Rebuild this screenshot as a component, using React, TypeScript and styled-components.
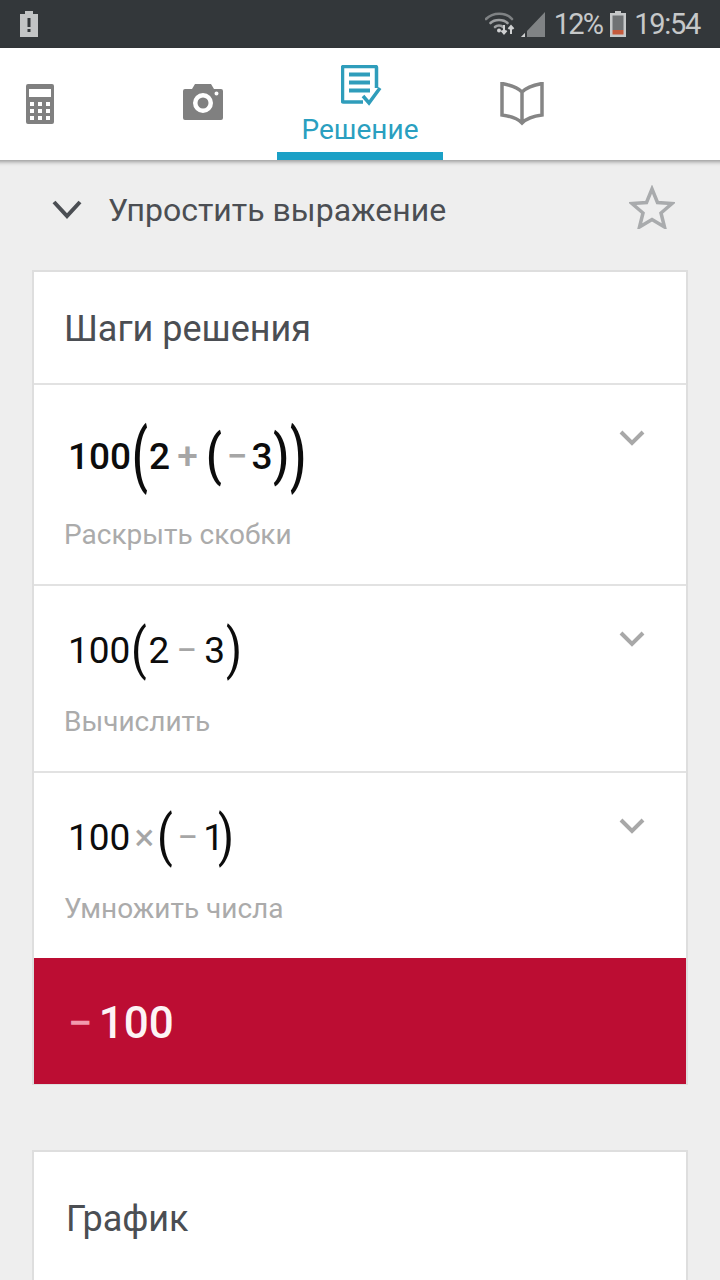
import React from "react";
import styled, { createGlobalStyle } from "styled-components";

const Global = createGlobalStyle`
  html, body { margin: 0; padding: 0; background: #eeeeee; }
  body { font-family: Roboto, "Liberation Sans", sans-serif; }
`;

const Page = styled.div`
  width: 720px;
  height: 1280px;
  overflow: hidden;
  display: flex;
  flex-direction: column;
  background: #eeeeee;
`;

const StatusBar = styled.div`
  height: 48px;
  flex: none;
  background: #33373a;
  display: flex;
  align-items: center;
  justify-content: space-between;
  padding: 0 20px;
  color: #c6c8c9;
  font-size: 29px;
`;

const StatusRight = styled.div`
  display: flex;
  align-items: center;
`;

const StatusText = styled.span<{ $ml: number; $ls: number }>`
  margin-left: ${(p) => p.$ml}px;
  line-height: 48px;
  letter-spacing: ${(p) => p.$ls}px;
`;

const Icon = styled.svg<{ $ml?: number; $mb?: number }>`
  display: block;
  flex: none;
  margin-left: ${(p) => p.$ml ?? 0}px;
  margin-bottom: ${(p) => p.$mb ?? 0}px;
`;

const TabBar = styled.nav`
  height: 112px;
  flex: none;
  background: #ffffff;
  display: flex;
  margin-left: -41px;
  box-shadow: 0 2px 4px rgba(0, 0, 0, 0.35);
  position: relative;
  width: 802px;
`;

const Tab = styled.div<{ $w: number }>`
  width: ${(p) => p.$w}px;
  position: relative;
  display: flex;
  flex-direction: column;
  align-items: center;
`;

const TabIcon = styled.svg<{ $top: number; $left?: number }>`
  display: block;
  margin-top: ${(p) => p.$top}px;
  margin-left: ${(p) => p.$left ?? 0}px;
`;

const TabLabel = styled.span`
  font-size: 28px;
  line-height: 30px;
  margin-top: 6px;
  color: #2a9fc0;
`;

const TabUnderline = styled.span`
  position: absolute;
  left: -8px;
  right: -8px;
  bottom: 0;
  height: 8px;
  background: #1ba0c6;
`;

const Toolbar = styled.div`
  height: 110px;
  box-sizing: border-box;
  flex: none;
  display: flex;
  align-items: center;
  padding: 0 45px 10px 52px;
`;

const ToolbarTitle = styled.h1`
  flex: 1;
  margin: 0 0 0 26px;
  font-size: 32px;
  font-weight: 400;
  color: #4b4e53;
`;

const Card = styled.section`
  margin: 0 32px;
  background: #ffffff;
  border: 2px solid #dedede;
  border-bottom-width: 1px;
  flex: none;
`;

const CardTitle = styled.h2<{ $pad: number }>`
  margin: 0;
  font-size: 36px;
  font-weight: 400;
  color: #4b4e53;
  padding-left: ${(p) => p.$pad}px;
`;

const StepsHeader = styled.div`
  height: 111px;
  box-sizing: border-box;
  padding-top: 2px;
  display: flex;
  align-items: center;
`;

const Step = styled.div<{ $h: number }>`
  height: ${(p) => p.$h}px;
  box-sizing: border-box;
  border-top: 2px solid #e2e2e2;
  padding: 0 41px 0 30px;
  display: flex;
  justify-content: space-between;
`;

const StepBody = styled.div`
  display: flex;
  flex-direction: column;
`;

const MathLine = styled.div<{ $top: number; $bold?: boolean; $h: number }>`
  display: flex;
  align-items: center;
  height: ${(p) => p.$h}px;
  margin-top: ${(p) => p.$top}px;
  margin-left: 4px;
  font-size: 37px;
  font-weight: ${(p) => (p.$bold ? 500 : 400)};
  color: #0c0c0c;
`;

const Paren = styled.span<{ $scale: number; $w: number }>`
  display: inline-block;
  width: ${(p) => p.$w}px;
  text-align: center;
  font-size: 40px;
  line-height: 40px;
  transform: scale(1.15, ${(p) => p.$scale});
`;

const NarrowDigit = styled.span`
  letter-spacing: -6px;
`;

const Operator = styled.span<{ $mx: number }>`
  color: #a6a6a6;
  margin: 0 ${(p) => p.$mx}px;
`;

const StepNote = styled.div<{ $top: number }>`
  font-size: 28px;
  line-height: 32px;
  color: #ababab;
  margin-top: ${(p) => p.$top}px;
`;

const Chevron = styled.svg`
  display: block;
  margin-top: 44px;
  flex: none;
`;

const Result = styled.div`
  height: 126px;
  box-sizing: border-box;
  padding: 3px 0 0 34px;
  background: #bc0d33;
  display: flex;
  align-items: center;
  color: #fdf3f5;
  font-size: 44px;
  font-weight: 500;
`;

const ResultMinus = styled.span`
  color: #f29aae;
  margin-right: 6px;
`;

const GraphCard = styled(Card)`
  margin-top: 65px;
  height: 200px;
`;

const GraphHeader = styled.div`
  height: 134px;
  display: flex;
  align-items: center;
`;

const StepChevron = () => (
  <Chevron width="26" height="18" viewBox="0 0 26 18">
    <path d="M2 3l11 11L24 3" fill="none" stroke="#a8a8a8" strokeWidth="4" />
  </Chevron>
);

export default function App() {
  return (
    <Page>
      <Global />
      <StatusBar>
        <Icon width="18" height="26" viewBox="0 0 18 26">
          <path d="M5 0h8v3h5v23H0V3h5z" fill="#c2c4c5" />
          <path d="M7.500 7h3v9h-3zM7.500 18h3v3h-3z" fill="#33373a" />
        </Icon>
        <StatusRight>
          <Icon width="34" height="26" viewBox="0 0 34 26">
            <g fill="none" stroke="#9d9fa1" strokeLinecap="round">
              <path d="M1 8c7-7 20-7 26 0" strokeWidth="2.6" stroke="#7f8284" />
              <path d="M5.500 12c4-4 13-4 17 0" strokeWidth="2.6" />
              <path d="M10 16c2-2 6-2 8 0" strokeWidth="2.6" />
            </g>
            <circle cx="14" cy="19.500" r="2" fill="#d0d1d2" />
            <path d="M19 14v8M16.500 19.500l2.500 3 2.500-3M26 23v-8M23.500 18l2.500-3 2.500 3" stroke="#d0d1d2" strokeWidth="2" fill="none" />
          </Icon>
          <Icon $ml={2} width="24" height="26" viewBox="0 0 24 26">
            <path d="M0 26l4-4v4zM6 20L24 1v25H6z" fill="#808385" />
            <path d="M0 26l4-4v4z" fill="#d0d1d2" />
          </Icon>
          <StatusText $ml={9} $ls={-1.8}>12%</StatusText>
          <Icon $ml={8} width="16" height="26" viewBox="0 0 16 26">
            <path d="M5 0h6v2h5v24H0V2h5z" fill="#c6c8c9" />
            <path d="M2.500 4.500h11V19h-11z" fill="#6f7274" />
            <path d="M2.500 19h11v4.500h-11z" fill="#c45a3c" />
          </Icon>
          <StatusText $ml={8} $ls={-1.3}>19:54</StatusText>
        </StatusRight>
      </StatusBar>

      <TabBar>
        <Tab $w={162}>
          <TabIcon $top={36} width="28" height="40" viewBox="0 0 28 40">
            <path fillRule="evenodd" d="M2 0h24a2 2 0 0 1 2 2v36a2 2 0 0 1-2 2H2a2 2 0 0 1-2-2V2a2 2 0 0 1 2-2zM3 5v8h22V5zM4 18v4h4v-4zm8 0v4h4v-4zm8 0v4h4v-4zM4 25v4h4v-4zm8 0v4h4v-4zm8 0v4h4v-4zM4 32v4h4v-4zm8 0v4h4v-4zm8 0v4h4v-4z" fill="#808080" />
          </TabIcon>
        </Tab>
        <Tab $w={164}>
          <TabIcon $top={36} width="40" height="36" viewBox="0 0 40 36">
            <path fillRule="evenodd" d="M12 0h16l3 5h7a2 2 0 0 1 2 2v27a2 2 0 0 1-2 2H2a2 2 0 0 1-2-2V7a2 2 0 0 1 2-2h7zM20 9a10 10 0 1 0 0 20 10 10 0 0 0 0-20zM20 13.500a5.500 5.500 0 1 1 0 11 5.500 5.500 0 0 1 0-11zM33.500 7.500a2 2 0 1 0 0 4 2 2 0 0 0 0-4z" fill="#808080" />
          </TabIcon>
        </Tab>
        <Tab $w={150}>
          <TabIcon $top={17} $left={4} width="42" height="44" viewBox="0 0 42 44">
            <path d="M22 37H2.500a1 1 0 0 1-1-1V2.500a1 1 0 0 1 1-1h32a1 1 0 0 1 1 1V23" fill="none" stroke="#2f9dbb" strokeWidth="3.500" />
            <path d="M8 7.500h21v4H8zM8 15.500h21v4H8zM8 23.500h21v4H8z" fill="#2f9dbb" />
            <path d="M22 31l6 7 11-15" fill="none" stroke="#2f9dbb" strokeWidth="3.500" />
          </TabIcon>
          <TabLabel>Решение</TabLabel>
          <TabUnderline />
        </Tab>
        <Tab $w={174}>
          <TabIcon $top={34} width="44" height="44" viewBox="0 0 44 44">
            <path d="M22 10C18 6 10 3 2 1.500V33c8 1 15 3 20 8 5-5 12-7 20-8V1.500C34 3 26 6 22 10zM22 10v30" fill="none" stroke="#858585" strokeWidth="3.500" />
          </TabIcon>
        </Tab>
      </TabBar>

      <Toolbar>
        <Icon width="30" height="20" viewBox="0 0 30 20">
          <path d="M2 2l13 14L28 2" fill="none" stroke="#4b4e53" strokeWidth="4" />
        </Icon>
        <ToolbarTitle>Упростить выражение</ToolbarTitle>
        <Icon $mb={6} width="46" height="44" viewBox="0 0 46 44">
          <path d="M23 4l5.500 13.500 14.500 1-11 9.500 3.500 14L23 34.500 10.500 42 14 28 3 18.500l14.500-1z" fill="none" stroke="#a9abad" strokeWidth="3.500" />
        </Icon>
      </Toolbar>

      <Card>
        <StepsHeader>
          <CardTitle $pad={30}>Шаги решения</CardTitle>
        </StepsHeader>
        <Step $h={201}>
          <StepBody>
            <MathLine $top={35} $h={72} $bold>
              100<Paren $scale={1.75} $w={18}>(</Paren>
              <span>2</span>
              <Operator $mx={7}>+</Operator>
              <Paren $scale={1.4} $w={18}>(</Paren>
              <Operator $mx={4}>−</Operator>
              <span>3</span>
              <Paren $scale={1.4} $w={16}>)</Paren>
              <Paren $scale={1.75} $w={18}>)</Paren>
            </MathLine>
            <StepNote $top={27}>Раскрыть скобки</StepNote>
          </StepBody>
          <StepChevron />
        </Step>
        <Step $h={187}>
          <StepBody>
            <MathLine $top={34} $h={60}>
              100<Paren $scale={1.4} $w={18}>(</Paren>
              <span>2</span>
              <Operator $mx={7}>−</Operator>
              <span>3</span>
              <Paren $scale={1.4} $w={18}>)</Paren>
            </MathLine>
            <StepNote $top={26}>Вычислить</StepNote>
          </StepBody>
          <StepChevron />
        </Step>
        <Step $h={187}>
          <StepBody>
            <MathLine $top={34} $h={60}>
              100
              <Operator $mx={4}>×</Operator>
              <Paren $scale={1.4} $w={14}>(</Paren>
              <Operator $mx={5}>−</Operator>
              <NarrowDigit>1</NarrowDigit>
              <Paren $scale={1.4} $w={16}>)</Paren>
            </MathLine>
            <StepNote $top={26}>Умножить числа</StepNote>
          </StepBody>
          <StepChevron />
        </Step>
        <Result>
          <ResultMinus>−</ResultMinus>100
        </Result>
      </Card>

      <GraphCard>
        <GraphHeader>
          <CardTitle $pad={32}>График</CardTitle>
        </GraphHeader>
      </GraphCard>
    </Page>
  );
}
